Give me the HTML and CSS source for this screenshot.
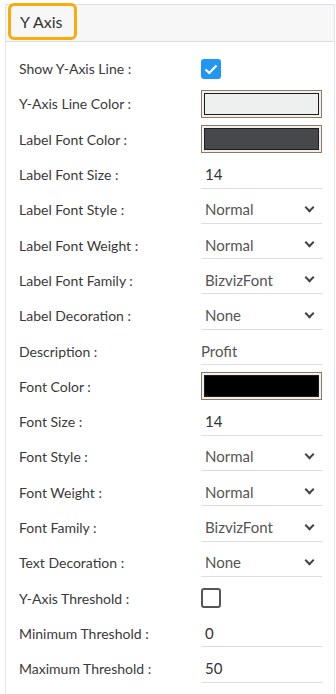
FILE: index.html
```html
<!DOCTYPE html>
<html>
<head>
  <meta charset="UTF-8">
  <title>Y Axis</title>
  <meta name="viewport" content="width=device-width, initial-scale=1.0">
  <link rel="stylesheet" href="styles.css">
</head>
<body>
  <div class="panel">
    <div class="panel-head">
      <span class="tab">Y Axis</span>
    </div>

    <div class="rows">
      <div class="row">
        <label>Show Y-Axis Line :</label>
        <span class="check on">
          <svg viewBox="0 0 20 20" width="20" height="20"><path d="M4.5 10.5 L8.3 14 L15.5 6.5" fill="none" stroke="#fff" stroke-width="2.2"/></svg>
        </span>
      </div>
      <div class="row">
        <label>Y-Axis Line Color :</label>
        <span class="color"><span class="swatch" style="background:#eef0ef"></span></span>
      </div>
      <div class="row">
        <label>Label Font Color :</label>
        <span class="color"><span class="swatch" style="background:#47484b"></span></span>
      </div>
      <div class="row">
        <label>Label Font Size :</label>
        <span class="field num">14</span>
      </div>
      <div class="row">
        <label>Label Font Style :</label>
        <span class="field select">Normal<i class="chev"></i></span>
      </div>
      <div class="row">
        <label>Label Font Weight :</label>
        <span class="field select">Normal<i class="chev"></i></span>
      </div>
      <div class="row">
        <label>Label Font Family :</label>
        <span class="field select">BizvizFont<i class="chev"></i></span>
      </div>
      <div class="row">
        <label>Label Decoration :</label>
        <span class="field select">None<i class="chev"></i></span>
      </div>
      <div class="row">
        <label>Description :</label>
        <span class="field text">Profit</span>
      </div>
      <div class="row">
        <label>Font Color :</label>
        <span class="color"><span class="swatch" style="background:#000"></span></span>
      </div>
      <div class="row">
        <label>Font Size :</label>
        <span class="field num">14</span>
      </div>
      <div class="row">
        <label>Font Style :</label>
        <span class="field select">Normal<i class="chev"></i></span>
      </div>
      <div class="row">
        <label>Font Weight :</label>
        <span class="field select">Normal<i class="chev"></i></span>
      </div>
      <div class="row">
        <label>Font Family :</label>
        <span class="field select">BizvizFont<i class="chev"></i></span>
      </div>
      <div class="row">
        <label>Text Decoration :</label>
        <span class="field select">None<i class="chev"></i></span>
      </div>
      <div class="row">
        <label>Y-Axis Threshold :</label>
        <span class="check off"></span>
      </div>
      <div class="row">
        <label>Minimum Threshold :</label>
        <span class="field num">0</span>
      </div>
      <div class="row">
        <label>Maximum Threshold :</label>
        <span class="field num">50</span>
      </div>
    </div>
  </div>
</body>
</html>
```
FILE: styles.css
```css
* {
  box-sizing: border-box;
}

body {
  margin: 0;
  font-family: Lato, "Open Sans", Arial, sans-serif;
  color: #3a3a3a;
  background: #fff;
}

.panel {
  margin: 4px 1px 0 5px;
  min-height: 690px;
  border-left: 1px solid #e1e5ea;
  border-right: 1px solid #e1e5ea;
  border-top: 1px solid #dcdfe2;
}

.panel-head {
  height: 37px;
  background: #f7f7f7;
  border-bottom: 1px solid #dcdcdc;
  position: relative;
}

.tab {
  position: absolute;
  left: 2px;
  top: -2px;
  width: 69px;
  height: 37px;
  border: 3px solid #f8ab0c;
  border-radius: 6px;
  padding-left: 9px;
  font-size: 16px;
  line-height: 31px;
  color: #333;
}

.rows {
  padding: 9px 12px 0 13px;
}

.row {
  display: grid;
  grid-template-columns: 182px 121px;
  align-items: center;
  height: 35.3px;
}

label {
  font-size: 14px;
  color: #3a3a3a;
}

.check {
  width: 20px;
  height: 20px;
  border-radius: 3px;
  display: block;
}

.check svg {
  display: block;
}

.check.on {
  background: #2196f3;
}

.check.off {
  border: 2px solid #555;
  border-radius: 3px;
}

.color {
  display: block;
  height: 28px;
  border: 1px solid #8c7867;
  background: #f2f0ee;
  padding: 2px;
}

.swatch {
  display: block;
  height: 100%;
  border: 1px solid #1e1e1e;
}

.field {
  display: flex;
  align-items: center;
  height: 28px;
  border-bottom: 1px solid #dedede;
  font-size: 15px;
  color: #555;
  padding-left: 4px;
  padding-right: 9px;
}

.field.num {
  color: #333;
}

.field.text {
  padding-left: 0;
}

.chev {
  margin-left: auto;
  width: 7px;
  height: 7px;
  border-right: 2px solid #444;
  border-bottom: 2px solid #444;
  transform: translateY(-2px) rotate(45deg);
}
```
